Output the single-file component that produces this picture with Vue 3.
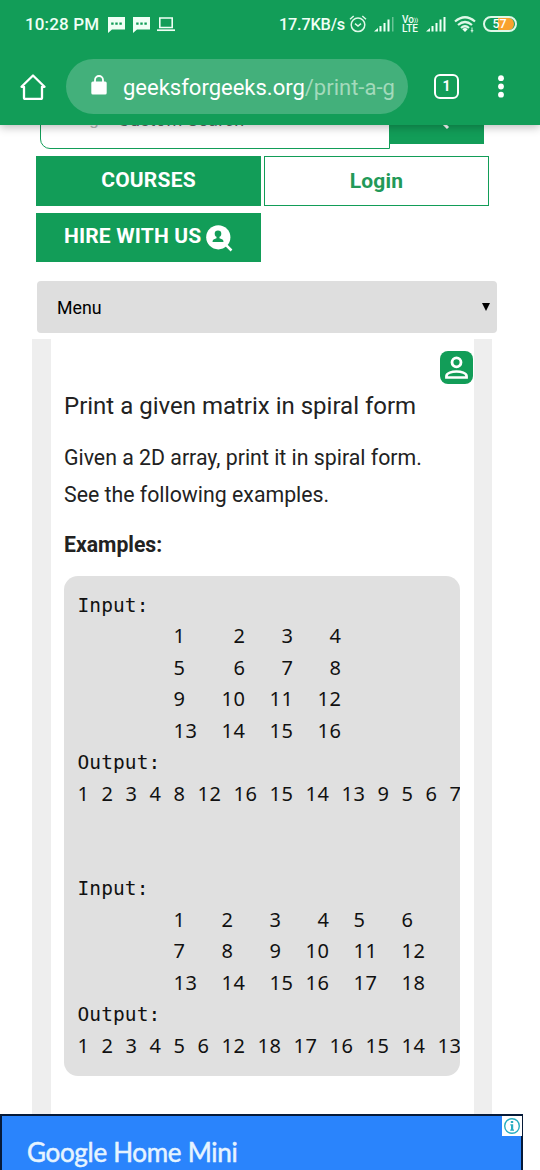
<script setup>
const toSegments = (row) => ({ text: row, label: /[a-z]/i.test(row) })

const examples = [
  'Input:',
  '        1    2   3   4',
  '        5    6   7   8',
  '        9   10  11  12',
  '        13  14  15  16',
  'Output:',
  '1 2 3 4 8 12 16 15 14 13 9 5 6 7',
  '',
  '',
  'Input:',
  '        1   2   3   4  5   6',
  '        7   8   9  10  11  12',
  '        13  14  15 16  17  18',
  'Output:',
  '1 2 3 4 5 6 12 18 17 16 15 14 13',
].map(toSegments)
</script>

<template>
  <div class="screen">
    <header class="chrome">
      <div class="status">
        <span class="clock">10:28 PM</span>
        <svg v-for="n in 2" :key="n" class="chat" width="17" height="16" viewBox="0 0 17 16">
          <path d="M0 0H17V12.5H4L0 16Z" fill="#effff5" />
          <path d="M3.2 5.4h2.4v2.3H3.2zM7.3 5.4h2.4v2.3H7.3zM11.4 5.4h2.4v2.3h-2.4z" fill="#129d58" />
        </svg>
        <svg class="laptop" width="18" height="15" viewBox="0 0 18 15" fill="none" stroke="#effff5">
          <path d="M2.8 1h12.4v9.5H2.8z" stroke-width="1.6" />
          <path d="M0 13.2h18" stroke-width="1.7" />
        </svg>
        <span class="rate">17.7KB/s</span>
        <svg class="alarm" width="18" height="18" viewBox="0 0 18 18" fill="none" stroke="#dff8e8" stroke-width="1.5">
          <circle cx="9" cy="9.8" r="6.8" />
          <path d="M1 4.2L4.7 1M17 4.2L13.3 1M6 8.7l3 2.3 3-2.3" />
        </svg>
        <svg class="signal one" width="21" height="16" viewBox="0 0 21 16" fill="#effff5">
          <path d="M0 15.5L4 12v3.5zM5.5 10h2v5.500h-2zM9.500 7h2v8.500h-2zM13.500 3.500h2v12h-2z" />
          <path d="M18 1h1.500v14.500H18z" opacity=".4" />
        </svg>
        <span class="volte"><span>Vo<i>))</i></span><span>LTE</span></span>
        <svg class="signal two" width="21" height="16" viewBox="0 0 21 16" fill="#effff5">
          <path d="M0 15.500L4 12v3.500zM5.500 10h2v5.500h-2zM9.500 7h2v8.500h-2zM13.500 3.500h2v12h-2zM17.500 1h2v14.500h-2z" />
        </svg>
        <svg class="wifi" width="22" height="17" viewBox="0 0 22 17" fill="none" stroke="#dff8e8" stroke-width="2.200">
          <path d="M1 5.500Q11-3 21 5.500M4 9Q11 3 18 9M7 12Q11 8.500 15 12" />
          <path d="M8.300 13.200Q11 11 13.700 13.200L11 16Z" fill="#effff5" stroke="none" />
          <path d="M18 11.500v5M16.700 14.700h2.600" stroke-width="1" />
        </svg>
        <span class="battery">57</span>
      </div>
      <div class="toolbar">
        <svg class="home" width="26" height="26" viewBox="0 0 26 26" fill="none" stroke="#fff" stroke-width="2.300" stroke-linecap="round" stroke-linejoin="round">
          <path d="M1.500 12.800L13 1.500l11.500 11.300H22V24a.8.8 0 0 1-.8.800H4.800A.8.8 0 0 1 4 24V12.800Z" />
        </svg>
        <div class="address">
          <svg class="lock" width="16" height="20" viewBox="0 0 16 20">
            <rect x=".3" y="6.500" width="15.400" height="13" rx="1.600" fill="#fff" />
            <path d="M4 7.500V5a4 4 0 0 1 8 0v2.500" fill="none" stroke="#fff" stroke-width="1.800" />
          </svg>
          <span class="url">geeksforgeeks.org<em>/print-a-g</em></span>
        </div>
        <span class="tabs">1</span>
        <svg class="dots" width="6" height="24" viewBox="0 0 6 24" fill="#fff">
          <circle cx="3" cy="3.200" r="2.900" /><circle cx="3" cy="11.500" r="2.900" /><circle cx="3" cy="19.700" r="2.900" />
        </svg>
      </div>
    </header>

    <main class="page">
      <div class="search">
        <div class="field"><span class="brand">Google</span><span class="hint">Custom Search</span></div>
        <div class="go">
          <svg width="24" height="24" viewBox="0 0 24 24" fill="none" stroke="#fff" stroke-width="3">
            <circle cx="9" cy="9" r="7" /><path d="M14 14l8 8" />
          </svg>
        </div>
      </div>
      <nav class="actions">
        <a class="solid">COURSES</a>
        <a class="outline">Login</a>
        <a class="solid hire">HIRE WITH US
          <svg width="27" height="27" viewBox="0 0 27 27">
            <circle cx="12.300" cy="12.300" r="12.100" fill="#fff" />
            <path d="M19 19l6.500 6.500" stroke="#fff" stroke-width="2.500" />
            <circle cx="12" cy="8.700" r="3.300" fill="#129d58" />
            <path d="M10.500 11h3v2.300l3 1.200q1 .5 1 2.500h-11q0-2 1-2.500l3-1.200z" fill="#129d58" />
          </svg>
        </a>
      </nav>
      <div class="menu"><span>Menu</span><svg width="8" height="8" viewBox="0 0 8 8"><path d="M0 0h8L4 8z" /></svg></div>
      <article class="article">
        <div class="profile">
          <svg width="33" height="33" viewBox="0 0 33 33" fill="none" stroke="#fff" stroke-width="2.800">
            <circle cx="16.500" cy="11.300" r="4.500" />
            <path d="M6.400 26.500v-1.300c0-3.300 5.600-4.700 10.100-4.700s10.100 1.400 10.100 4.700v1.300z" stroke-width="2.600" />
          </svg>
        </div>
        <h1>Print a given matrix in spiral form</h1>
        <p>Given a 2D array, print it in spiral form.<br>See the following examples.</p>
        <strong>Examples:</strong>
        <div class="code">
          <div v-for="(row, i) in examples" :key="i" class="row" :class="{ label: row.label }">{{ row.text }}</div>
        </div>
      </article>
    </main>

    <footer class="ad">
      <span>Google Home Mini</span>
      <svg class="info" width="20" height="20" viewBox="0 0 20 20">
        <path d="M0 0h20v20H0z" fill="#fff" />
        <circle cx="10" cy="10" r="7.300" fill="none" stroke="#28adc1" stroke-width="1.400" />
        <path d="M8.800 5h2.400v2H8.800zM8.300 8.200h2.900v5.200h.8v1.400H8.200v-1.400h.8V9.600h-.7z" fill="#28adc1" />
      </svg>
    </footer>
  </div>
</template>

<style scoped>
* { box-sizing: border-box; }
.screen {
  width: 540px; height: 1170px; overflow: hidden; background: #fff;
  font-family: Roboto, sans-serif; display: flex; flex-direction: column;
}
.chrome {
  height: 125px; flex: none; background: #129d58; color: #fff;
  position: relative; z-index: 2; box-shadow: 0 2px 9px rgba(0, 0, 0, .28);
}
.status { height: 59px; padding: 0 23px 11px 25px; display: flex; align-items: center; color: #effff5; }
.clock { font-size: 17px; font-weight: 500; width: 83px; flex: none; white-space: nowrap; letter-spacing: .15px; }
.chat { margin-right: 8px; margin-top: 1px; flex: none; }
.laptop { margin-left: -1px; flex: none; }
.rate { margin-left: 104px; width: 66px; flex: none; font-size: 16.300px; font-weight: 500; white-space: nowrap; letter-spacing: -.2px; }
.alarm { margin-left: 4px; flex: none; }
.signal { flex: none; }
.signal.one { margin-left: 7px; }
.volte { width: 18px; flex: none; margin-left: 7px; font-size: 10px; line-height: 9px; font-weight: 500; display: flex; flex-direction: column; white-space: nowrap; }
.volte i { font-style: normal; font-size: 6px; line-height: 6px; vertical-align: 1px; }
.signal.two { margin-left: 6px; }
.wifi { margin-left: 7px; flex: none; }
.battery {
  margin-left: 7px; width: 34px; height: 16px; flex: none; border: 2px solid #dff8e8; border-radius: 8px;
  font-size: 12.500px; line-height: 12px; font-weight: 500; text-align: center; color: #fff;
  background: linear-gradient(90deg, #129d58 45%, #f9a12e 45%) content-box; padding-right: 1px;
}
.toolbar { height: 55px; display: flex; align-items: center; padding-left: 20px; }
.address {
  width: 342px; height: 55px; margin-left: 20px; border-radius: 28px; background: #43b07b;
  display: flex; align-items: center; padding-left: 25px;
}
.lock { margin-top: -3px; }
.url { margin: 2px 0 0 16px; font-size: 22px; white-space: nowrap; }
.url em { font-style: normal; color: #a3dabb; }
.tabs {
  margin-left: 26px; width: 25px; height: 25px; border: 2.500px solid #fff; border-radius: 6px;
  font-size: 14px; font-weight: 700; line-height: 20px; text-align: center;
}
.dots { margin-left: 39px; }
.page { flex: 1; min-height: 0; padding-left: 32px; overflow: hidden; margin-top: -35px; }
.search { height: 60px; margin-left: 8px; display: flex; align-items: flex-start; }
.field { width: 350px; height: 59px; border: 1.500px solid #129d58; border-radius: 10px 0 0 10px; display: flex; padding: 8px 0 0 16px; }
.brand { width: 61px; font-family: "Liberation Sans", sans-serif; font-size: 17px; color: #bbb; line-height: 41px; }
.hint { font-size: 18px; letter-spacing: .3px; color: #666; line-height: 41px; white-space: nowrap; }
.go { width: 94px; height: 54px; background: #129d58; padding: 16px 0 0 36px; }
.go svg { display: block; }
.actions { margin: 6px 0 0 4px; display: grid; grid-template-columns: 225px 225px; column-gap: 3px; row-gap: 7px; }
.actions a { height: 50px; font-size: 21px; letter-spacing: .15px; font-weight: 700; display: flex; align-items: center; justify-content: center; white-space: nowrap; }
.solid { background: #129d58; color: #fff; padding-bottom: 2px; }
.actions .solid { letter-spacing: .2px; }
.actions .hire { height: 49px; letter-spacing: .15px; justify-content: flex-start; padding-left: 28px; gap: 5px; padding-bottom: 3px; }
.hire svg { margin-top: 4px; }
.outline { border: 1.500px solid #129d58; color: #229958; }
.menu {
  margin: 19px 0 0 5px; width: 460px; height: 52px; background: #dedede; border-radius: 4px;
  display: flex; align-items: center; justify-content: space-between; padding: 0 7px 0 20px; font-size: 17.800px;
}
.article {
  margin-top: 6px; width: 460px; height: 790px; border: solid #eee; border-width: 0 18px 0 19px;
  padding-left: 13px; color: #222;
}
.profile { margin: 12px 0 0 376px; width: 33px; height: 33px; border-radius: 8px; background: #129d58; display: inline-block; vertical-align: top; }
.profile svg { display: block; }
h1 { margin: 4px 0 0; height: 36px; font-size: 24px; line-height: 36px; font-weight: 400; white-space: nowrap; }
p { margin: 15px 0 0; font-size: 21.300px; line-height: 37px; white-space: nowrap; }
strong { display: block; margin-top: 13px; height: 37px; line-height: 37px; font-size: 21.200px; font-weight: 700; }
.code {
  margin-top: 13px; width: 396px; height: 500px; border-radius: 14px; background: #e0e0e0;
  padding: 12.500px 0 0 13.500px; overflow: hidden;
}
.row {
  height: 31.500px; line-height: 31.500px; white-space: pre; color: #111;
  font-family: "Noto Sans", sans-serif; font-size: 20px; letter-spacing: .56px; word-spacing: 6.240px;
}
.row.label { font-family: "DejaVu Sans Mono", monospace; font-size: 19.500px; line-height: 33.500px; letter-spacing: .1px; word-spacing: 0; }
.ad {
  position: relative; z-index: 1; height: 56px; width: 523px; flex: none; background: #2a84fc;
  border: 2px solid #061a38; border-bottom: 0; display: flex; justify-content: space-between; padding-left: 25px;
}
.ad span { font-family: Lato, sans-serif; font-size: 26px; letter-spacing: -.3px; line-height: 31px; margin-top: 21px; color: #e6f4ff; white-space: nowrap; -webkit-text-stroke: .5px #e6f4ff; }
.info { margin-right: -1px; }
</style>
